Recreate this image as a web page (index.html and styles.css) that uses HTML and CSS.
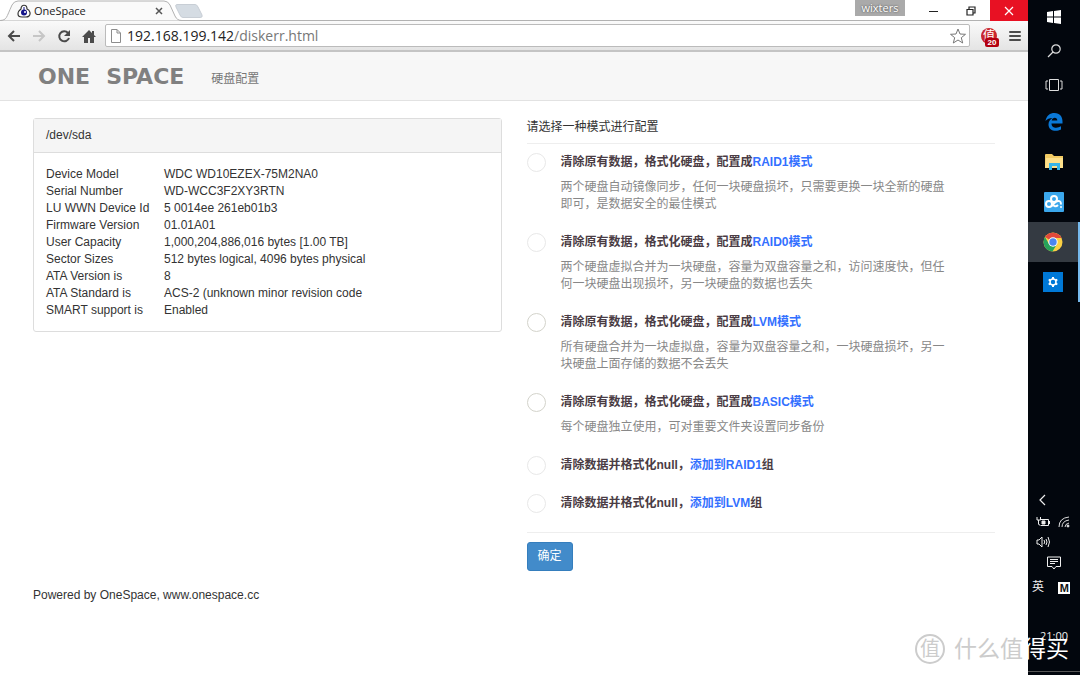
FILE: index.html
```html
<!DOCTYPE html>
<html lang="zh-CN">
<head>
<meta charset="utf-8">
<title>OneSpace</title>
<link rel="stylesheet" href="styles.css">
</head>
<body>
<div class="desktop">
  <div class="browser">
    <div class="tabstrip">
      <div class="tab">
        <svg class="tab-shape" viewBox="0 0 204 21" preserveAspectRatio="none"><path d="M0 20.5C7 20 6 18 12 5Q14 1 18 1H164Q168 1 170 5L175 16Q177 20.500 182 20.500H204" fill="#fafafa" stroke="#b2b2b2"/></svg>
        <svg class="favicon" width="14" height="14" viewBox="0 0 14 14"><path d="M4 5C4 0 10 0 10 5C13 6 14 10 12 12Q11 13 9 13H5Q1 13 1 10Q1 7 4 5Z" fill="#fff" stroke="#333" stroke-width="1.200"/><circle cx="7" cy="8.500" r="3" fill="#15158a"/><circle cx="8" cy="8" r="1" fill="#fff"/><path d="M7 3V6" stroke="#15158a"/></svg>
        <span class="tab-title">OneSpace</span>
        <button class="tab-close" aria-label="关闭标签页"><svg width="8" height="8" viewBox="0 0 8 8"><path d="M1 1L7 7M7 1L1 7" stroke="#555" stroke-width="1.500"/></svg></button>
      </div>
      <button class="new-tab" aria-label="新标签页"><svg width="28" height="14" viewBox="0 0 28 14"><path d="M2 .5H20Q22 .5 23 3L27 11Q28 13.500 25 13.500H8Q6 13.500 5 11L1 3Q0 .5 2 .5Z" fill="#d5dce3" stroke="#c8ced5"/></svg></button>
      <div class="window-controls">
        <span class="user">wixters</span>
        <button aria-label="最小化"><svg width="12" height="12" viewBox="0 0 12 12"><path d="M2 6.500H11" stroke="#222"/></svg></button>
        <button aria-label="还原"><svg width="12" height="12" viewBox="0 0 12 12" fill="none" stroke="#222" stroke-width="1.200"><path d="M2 4.500H8V10H2ZM4 4V2H10V8H8"/></svg></button>
        <button class="close" aria-label="关闭"><svg width="12" height="12" viewBox="0 0 12 12"><path d="M2 2L10 10M10 2L2 10" stroke="#fff" stroke-width="1.200"/></svg></button>
      </div>
    </div>
    <div class="toolbar">
      <button aria-label="后退"><svg width="14" height="14" viewBox="0 0 14 14" fill="none" stroke="#4b4b4b" stroke-width="2"><path d="M13 7H2M7 2L2 7L7 12"/></svg></button>
      <button aria-label="前进"><svg width="14" height="14" viewBox="0 0 14 14" fill="none" stroke="#c6c6c6" stroke-width="2"><path d="M1 7H12M7 2L12 7L7 12"/></svg></button>
      <button aria-label="刷新"><svg width="14" height="14" viewBox="0 0 14 14"><path d="M11 4A5 5 0 1 0 12 9" fill="none" stroke="#4b4b4b" stroke-width="2"/><path d="M13 1V7H7Z" fill="#4b4b4b"/></svg></button>
      <button aria-label="主页"><svg width="14" height="14" viewBox="0 0 14 14"><path d="M7 1L0 8H2V14H6V9H8V14H12V8H14L12 6V2H10V4Z" fill="#4b4b4b"/></svg></button>
      <div class="address">
        <svg width="12" height="14" viewBox="0 0 12 14" fill="#fff" stroke="#8c8c8c"><path d="M1.500.5H7L10.500 4V13.500H1.500ZM7 .5V4H10.500"/></svg>
        <div class="url" role="textbox" aria-label="地址栏" tabindex="0">192.168.199.142<span>/diskerr.html</span></div>
        <button aria-label="收藏"><svg width="16" height="16" viewBox="0 0 16 16"><path d="M8 1L10 6L15.500 6.300L11.300 9.700L12.700 15L8 12L3.300 15L4.700 9.700L.5 6.300L6 6Z" fill="#fff" stroke="#777"/></svg></button>
      </div>
      <button class="extension" aria-label="扩展程序"><span class="ext-mark">值</span><span class="badge">20</span></button>
      <button aria-label="菜单"><svg width="12" height="12" viewBox="0 0 12 12"><path d="M1 2H11M1 6H11M1 10H11" stroke="#4b4b4b" stroke-width="2" stroke-linecap="round"/></svg></button>
    </div>
    <header class="site-header">
      <div class="logo"><span>ONE</span><span>SPACE</span></div>
      <span class="page-name">硬盘配置</span>
    </header>
    <main class="content">
      <section class="panel">
        <h2>/dev/sda</h2>
        <table>
          <tbody>
            <tr><th scope="row">Device Model</th><td>WDC WD10EZEX-75M2NA0</td></tr>
            <tr><th scope="row">Serial Number</th><td>WD-WCC3F2XY3RTN</td></tr>
            <tr><th scope="row">LU WWN Device Id</th><td>5 0014ee 261eb01b3</td></tr>
            <tr><th scope="row">Firmware Version</th><td>01.01A01</td></tr>
            <tr><th scope="row">User Capacity</th><td>1,000,204,886,016 bytes [1.00 TB]</td></tr>
            <tr><th scope="row">Sector Sizes</th><td>512 bytes logical, 4096 bytes physical</td></tr>
            <tr><th scope="row">ATA Version is</th><td>8</td></tr>
            <tr><th scope="row">ATA Standard is</th><td>ACS-2 (unknown minor revision code</td></tr>
            <tr><th scope="row">SMART support is</th><td>Enabled</td></tr>
          </tbody>
        </table>
      </section>
      <form class="modes">
        <h2>请选择一种模式进行配置</h2>
        <div class="options">
          <div class="option faint"><input type="radio" name="mode" id="raid1"><div><label for="raid1">清除原有数据，格式化硬盘，配置成<em>RAID1模式</em></label><p>两个硬盘自动镜像同步，任何一块硬盘损坏，只需要更换一块全新的硬盘即可，是数据安全的最佳模式</p></div></div>
          <div class="option faint"><input type="radio" name="mode" id="raid0"><div><label for="raid0">清除原有数据，格式化硬盘，配置成<em>RAID0模式</em></label><p>两个硬盘虚拟合并为一块硬盘，容量为双盘容量之和，访问速度快，但任何一块硬盘出现损坏，另一块硬盘的数据也丢失</p></div></div>
          <div class="option"><input type="radio" name="mode" id="lvm"><div><label for="lvm">清除原有数据，格式化硬盘，配置成<em>LVM模式</em></label><p>所有硬盘合并为一块虚拟盘，容量为双盘容量之和，一块硬盘损坏，另一块硬盘上面存储的数据不会丢失</p></div></div>
          <div class="option"><input type="radio" name="mode" id="basic"><div><label for="basic">清除原有数据，格式化硬盘，配置成<em>BASIC模式</em></label><p>每个硬盘独立使用，可对重要文件夹设置同步备份</p></div></div>
          <div class="option faint"><input type="radio" name="mode" id="add-raid1"><div><label for="add-raid1">清除数据并格式化null，<em>添加到RAID1</em>组</label></div></div>
          <div class="option faint"><input type="radio" name="mode" id="add-lvm"><div><label for="add-lvm">清除数据并格式化null，<em>添加到LVM</em>组</label></div></div>
        </div>
        <button type="button" class="submit">确定</button>
      </form>
    </main>
    <footer class="site-footer">Powered by OneSpace, www.onespace.cc</footer>
  </div>
  <aside class="taskbar">
    <nav class="apps">
      <button aria-label="开始"><svg width="14" height="14" viewBox="0 0 14 14" fill="#fff"><path d="M0 2L6 1V6.500H0ZM7 1L14 0V6.500H7ZM0 7.500H6V13L0 12ZM7 7.500H14V14L7 13Z"/></svg></button>
      <button aria-label="搜索"><svg width="14" height="14" viewBox="0 0 14 14" fill="none" stroke="#ddd" stroke-width="1.200"><circle cx="9" cy="5" r="4.200"/><path d="M6 8L1 13"/></svg></button>
      <button class="views" aria-label="任务视图"><svg width="18" height="14" viewBox="0 0 18 14" fill="none" stroke="#ddd"><path d="M4.500 1.500H13.500V12.500H4.500ZM3 3H1V11H3M15 3H17V11H15"/></svg></button>
      <button class="pinned" aria-label="Edge"><svg width="18" height="18" viewBox="0 0 18 18"><path d="M.5 8C1.500 2.500 5 0 9.500 0C15 0 17.500 4 17.500 8.500V10.500H6.500C6.500 15.500 12.500 15.500 16 13.300V16.500C11 19 3.500 18 3.500 11.500C3.500 8.500 5 6.500 7.500 5C4.500 5 2 6 .5 8ZM6.700 7.500H12.300C12.300 3.800 7.500 3.800 6.700 7.500Z" fill="#0a78d7" fill-rule="evenodd"/></svg></button>
      <button class="pinned" aria-label="文件资源管理器"><svg width="18" height="16" viewBox="0 0 18 16"><path d="M0 1Q0 0 1 0H7L9 2H18V14H0Z" fill="#f3cb64"/><path d="M1 4H18V14H0Z" fill="#fde08b"/><path d="M4 16V9H15V16H12V12H7V16Z" fill="#35b4e8"/></svg></button>
      <button class="pinned" aria-label="网盘"><svg width="20" height="20" viewBox="0 0 20 20"><rect width="20" height="20" rx="1" fill="#3ba7ec"/><g fill="none" stroke="#fff" stroke-width="2"><circle cx="10" cy="7" r="3"/><circle cx="5" cy="12" r="3"/><path d="M7.500 14L12 9.500Q17 7.500 17 12.500"/><path d="M8 12Q11 16 14 13"/></g><circle cx="17" cy="15" r="1" fill="#fff"/></svg></button>
      <button class="pinned active" aria-label="Chrome"><svg width="20" height="20" viewBox="0 0 20 20"><circle cx="10" cy="10" r="9.500" fill="#fbd044"/><path d="M10 10L2 5A9.500 9.500 0 0 1 18.500 6H10Z" fill="#e2493b"/><path d="M2 5A9.500 9.500 0 0 0 9.500 19.500L14 12L10 10L6 12Z" fill="#26a35b"/><circle cx="10" cy="10" r="4.700" fill="#fff"/><circle cx="10" cy="10" r="3.700" fill="#4a86f0"/></svg></button>
      <button class="pinned running" aria-label="设置"><svg width="20" height="20" viewBox="0 0 20 20"><rect width="20" height="20" fill="#0078d7"/><circle cx="10" cy="10" r="3" fill="none" stroke="#fff" stroke-width="1.500"/><path d="M10 5V7M10 13V15M5.700 7.500L7.400 8.500M12.600 11.500L14.300 12.500M5.700 12.500L7.400 11.500M12.600 8.500L14.300 7.500" stroke="#fff" stroke-width="2"/></svg></button>
    </nav>
    <div class="tray">
      <button aria-label="显示隐藏的图标"><svg width="14" height="12" viewBox="0 0 14 12" fill="none" stroke="#eee" stroke-width="1.200"><path d="M9 1L4 6L9 11"/></svg></button><span></span>
      <button aria-label="电池"><svg width="14" height="12" viewBox="0 0 14 12" fill="none" stroke="#eee"><path d="M4 3.500H12.500V9.500H4.500M13.500 5V8M1 1V4H4.500V1M2.500 4V8Q2.500 9 4 9"/><path d="M6 5H9V8H6Z" fill="#eee"/></svg></button>
      <button aria-label="网络"><svg width="12" height="12" viewBox="0 0 12 12" fill="none" stroke="#ddd"><path d="M1 11Q1 2 11 1M4 11Q4 5 11 4M7 11Q7 8 11 7"/><circle cx="10" cy="10" r="1" fill="#fff"/></svg></button>
      <button aria-label="音量"><svg width="14" height="12" viewBox="0 0 14 12" fill="none" stroke="#eee"><path d="M1 4H3L6 1V11L3 8H1ZM8 4Q9.500 6 8 8M10 3Q12 6 10 9M12 1Q15 6 12 11"/></svg></button><span></span>
      <button class="notice" aria-label="通知"><svg width="14" height="14" viewBox="0 0 14 14" fill="none" stroke="#eee"><path d="M.5 1H13.500V10.500H9L7 13L5 10.500H.5ZM3 3.500H11M3 5.500H11M3 7.500H8"/></svg></button>
      <span class="lang">英</span><span class="ime">M</span>
    </div>
    <time class="clock">21:00</time>
  </aside>
  <div class="watermark"><span class="seal">值</span><span>什么值<b>得买</b></span></div>
</div>
</body>
</html>
```
FILE: styles.css
```css
* { box-sizing: border-box; }
body {
  margin: 0;
  background: #fff;
  color: #333;
  font: 12px/17px "Liberation Sans", "Noto Sans CJK SC", sans-serif;
}
button {
  display: grid;
  place-items: center;
  padding: 0;
  border: 0;
  background: none;
  font: inherit;
}
svg { display: block; }
h2, p { margin: 0; font-size: inherit; font-weight: normal; }

.desktop {
  position: relative;
  display: grid;
  grid-template-columns: 1fr 52px;
  min-height: 100vh;
}
.browser { min-width: 0; }

/* Browser chrome */
.tabstrip {
  display: flex;
  align-items: flex-start;
  height: 21px;
  border-bottom: 1px solid #b2b2b2;
}
.tab {
  position: relative;
  display: flex;
  align-items: center;
  gap: 3px;
  width: 175px;
  height: 21px;
  padding: 0 12px 0 17px;
}
.tab-shape { position: absolute; top: 0; left: 0; width: 204px; height: 21px; }
.favicon, .tab-title, .tab-close { position: relative; }
.tab-title { flex: 1; font: 11px/20px "Open Sans", sans-serif; color: #222; }
.new-tab { position: relative; margin-top: 4px; }
.window-controls { display: flex; align-items: flex-start; margin-left: auto; }
.window-controls button { width: 38px; height: 21px; }
.window-controls .close { background: #e81123; }
.user {
  width: 50px;
  margin-right: 9px;
  background: #aaa;
  color: #fff;
  font: 11px/16px "Open Sans", sans-serif;
  text-align: center;
  text-shadow: 0 0 2px #333;
}
.toolbar {
  display: flex;
  align-items: center;
  gap: 11px;
  height: 31px;
  padding: 0 7px;
  border-bottom: 2px solid #c4c4c4;
  background: linear-gradient(#fafafa, #e4e4e4);
}
.address {
  display: flex;
  flex: 1;
  align-items: center;
  gap: 5px;
  height: 23px;
  margin-left: -2px;
  padding: 0 3px 0 4px;
  border: 1px solid #bbb;
  border-radius: 2px;
  background: #fff;
}
.url { flex: 1; color: #222; font: 14px/20px "Noto Sans", "Open Sans", sans-serif; font-family: "Open Sans", sans-serif; }
.url span { color: #777; }
.extension { position: relative; width: 20px; height: 22px; margin: 0 -1px 0 -2px; }
.ext-mark {
  width: 16px;
  height: 16px;
  border-radius: 8px;
  background: #c9262d;
  color: #fff;
  font-size: 12px;
  line-height: 16px;
}
.badge {
  position: absolute;
  right: 0;
  bottom: 0;
  width: 14px;
  border-radius: 2px;
  background: #b3000f;
  color: #fff;
  font: bold 8px/9px "Liberation Sans", sans-serif;
}

/* OneSpace page */
.site-header {
  display: flex;
  align-items: center;
  gap: 27px;
  height: 49px;
  padding: 2px 38px 0;
  border-bottom: 1px solid #e2e2e2;
  background: #f7f7f7;
  color: #777;
}
.logo { display: flex; gap: 16px; font: bold 22px/26px "DejaVu Sans", sans-serif; color: #808080; }
.page-name { padding-top: 4px; }
.content {
  display: grid;
  grid-template-columns: 1fr 1fr;
  gap: 25px;
  align-items: start;
  padding: 17px 33px 16px;
}
.panel {
  border: 1px solid #ddd;
  border-radius: 3px;
}
.panel h2 {
  padding: 8px 12px;
  border-bottom: 1px solid #ddd;
  background: #f5f5f5;
}
.panel table { margin: 13px 12px 12px; border-spacing: 0; }
.panel th { width: 118px; padding: 0; font-weight: normal; text-align: left; }
.panel td { padding: 0; }
.modes h2 { padding: 1px 0 7px; border-bottom: 1px solid #eee; }
.options {
  display: grid;
  gap: 20px;
  padding: 9px 0 20px;
  border-bottom: 1px solid #eee;
}
.option { display: flex; align-items: flex-start; gap: 15px; padding-right: 46px; }
.option input {
  flex: none;
  width: 19px;
  height: 19px;
  margin: 0 0 -2px;
  appearance: none;
  border: 1px solid #d3d3cb;
  border-radius: 10px;
  background: #fff;
}
.option.faint input { border-color: #e8e8e8; }
.option label { display: block; padding-top: 1px; color: #4a3c44; font-weight: bold; }
.option em { color: #3370ff; font-style: normal; }
.option p { padding-top: 8px; color: #888; }
.submit {
  height: 29px;
  margin-top: 9px;
  padding: 0 10px;
  border: 1px solid #357ebd;
  border-radius: 3px;
  background: #428bca;
  color: #fff;
}
.site-footer { padding: 0 33px; }

/* Taskbar */
.taskbar {
  display: flex;
  flex-direction: column;
  background: #02060d;
  color: #eee;
}
.apps { display: grid; }
.apps button { height: 34px; }
.apps .pinned { height: 40px; }
.apps .active { border-right: 2px solid #76b9ed; background: #343a42; }
.apps .running { border-right: 2px solid #76b9ed; }
.tray {
  display: grid;
  grid-template-columns: 1fr 1fr;
  grid-template-rows: 24px 20px 20px 21px 29px;
  align-items: center;
  justify-items: center;
  margin-top: auto;
  padding: 0 5px 0 4px;
}
.notice { grid-column: 1 / -1; }
.lang { justify-self: start; }
.ime {
  width: 12px;
  background: #fff;
  color: #111;
  font: bold 11px/12px "Liberation Sans", sans-serif;
  text-align: center;
}
.clock {
  height: 45px;
  margin: 25px 0 3px;
  border-bottom: 1px solid #555;
  font: 11px/17px "Open Sans", sans-serif;
  text-align: center;
}
.watermark {
  position: absolute;
  right: 11px;
  bottom: 10px;
  display: flex;
  align-items: center;
  gap: 9px;
  color: #ccc;
  font-size: 23px;
  line-height: 32px;
}
.watermark b { color: #fff; font-weight: normal; }
.seal {
  width: 30px;
  height: 30px;
  border: 2px solid #ccc;
  border-radius: 15px;
  font-size: 20px;
  line-height: 26px;
  text-align: center;
}
```
